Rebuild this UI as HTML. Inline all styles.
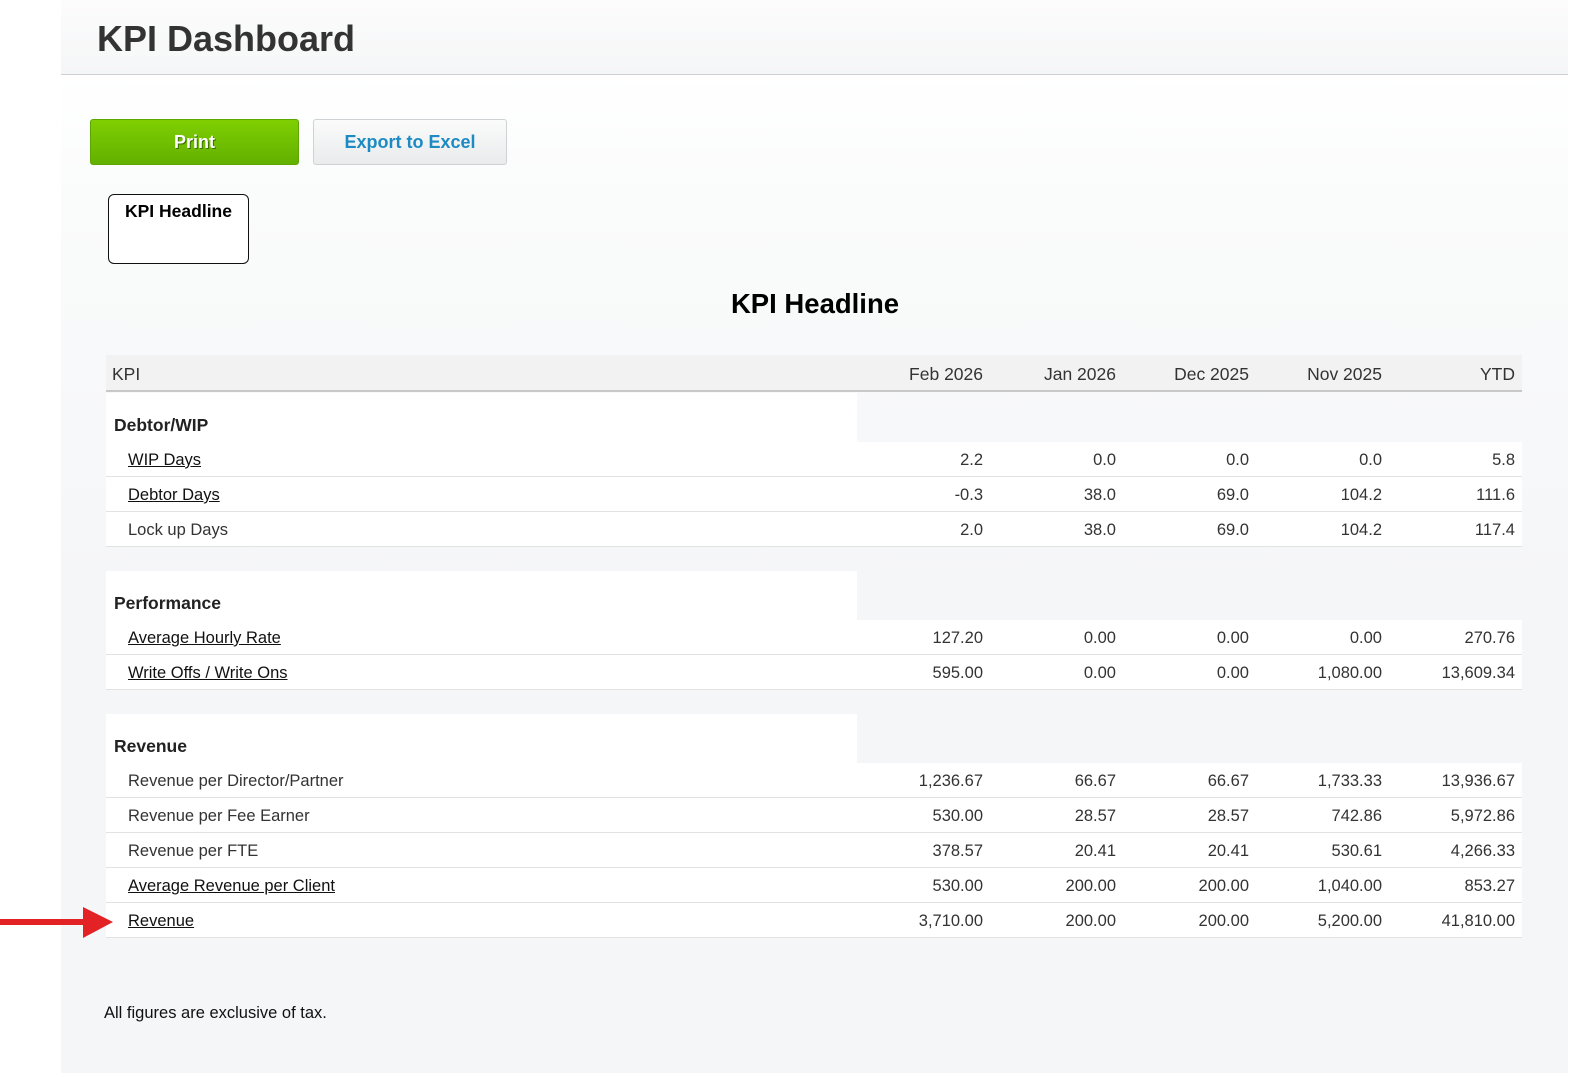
<!DOCTYPE html>
<html><head><meta charset="utf-8"><style>
*{margin:0;padding:0;box-sizing:border-box}
body{width:1574px;height:1078px;background:#fff;font-family:"Liberation Sans",Arial,sans-serif;position:relative;overflow:hidden;color:#222}
.main{position:absolute;left:61px;top:0;width:1507px;height:1073px;background:linear-gradient(#fff 75px,#fafbfb 200px,#f5f6f8 600px)}
.hdr{position:absolute;left:61px;top:0;width:1507px;height:75px;background:linear-gradient(#fcfcfc,#f5f6f7);border-bottom:1px solid #cfcfcf}
h1{position:absolute;left:97px;top:18px;font-size:36px;font-weight:bold;color:#333}
.btn{position:absolute;top:119px;height:46px;border-radius:3px;font-size:18px;font-weight:bold;text-align:center;line-height:44px}
.print{left:90px;width:209px;background:linear-gradient(#7fcf02,#63b000);border:1px solid #5da600;color:#fff;text-shadow:1px 1px 0 #3a6d00}
.excel{left:313px;width:194px;background:linear-gradient(#fbfbfb,#e9ebec);border:1px solid #cfd2d4;color:#1d8bc3}
.tab{position:absolute;left:108px;top:194px;width:141px;height:70px;border:1px solid #111;border-radius:6px;background:#fff;font-weight:bold;font-size:17.5px;text-align:center;padding-top:6px;color:#000}
.title{position:absolute;left:0;width:1630px;top:288px;text-align:center;font-size:27.5px;font-weight:bold;color:#000}
.r{position:absolute;left:106px;width:1416px;height:35px;background:#fff;border-bottom:1px solid #e2e2e0;font-size:16.5px;color:#333}
.r span{position:absolute;top:9px}
.r .l{left:22px}
.r a{color:#111;text-decoration:underline}
.n{text-align:right;width:120px}
.c1{left:757px}.c2{left:890px}.c3{left:1023px}.c4{left:1156px}.c5{left:1289px}
.th{position:absolute;left:106px;top:355px;width:1416px;height:37px;background:#f2f2f2;border-bottom:2px solid #c8c8c8;font-size:17.5px;color:#333}
.th span{position:absolute;top:9px}
.sec{position:absolute;left:106px;width:751px;height:50px;background:#fff;font-weight:bold;font-size:17.5px;color:#222;padding:22px 0 0 8px}
.note{position:absolute;left:104px;top:1004px;font-size:16.5px;color:#111}
</style></head><body>
<div class="main"></div>
<div class="hdr"></div>
<h1>KPI Dashboard</h1>
<div class="btn print">Print</div>
<div class="btn excel">Export to Excel</div>
<div class="tab">KPI Headline</div>
<div class="title">KPI Headline</div>
<div class="th"><span style="left:6px">KPI</span><span class="n c1">Feb 2026</span><span class="n c2">Jan 2026</span><span class="n c3">Dec 2025</span><span class="n c4">Nov 2025</span><span class="n c5">YTD</span></div>

<div class="sec" style="top:393px">Debtor/WIP</div>
<div class="r" style="top:442px"><span class="l"><a>WIP Days</a></span><span class="n c1">2.2</span><span class="n c2">0.0</span><span class="n c3">0.0</span><span class="n c4">0.0</span><span class="n c5">5.8</span></div>
<div class="r" style="top:477px"><span class="l"><a>Debtor Days</a></span><span class="n c1">-0.3</span><span class="n c2">38.0</span><span class="n c3">69.0</span><span class="n c4">104.2</span><span class="n c5">111.6</span></div>
<div class="r" style="top:512px"><span class="l">Lock up Days</span><span class="n c1">2.0</span><span class="n c2">38.0</span><span class="n c3">69.0</span><span class="n c4">104.2</span><span class="n c5">117.4</span></div>

<div class="sec" style="top:571px">Performance</div>
<div class="r" style="top:620px"><span class="l"><a>Average Hourly Rate</a></span><span class="n c1">127.20</span><span class="n c2">0.00</span><span class="n c3">0.00</span><span class="n c4">0.00</span><span class="n c5">270.76</span></div>
<div class="r" style="top:655px"><span class="l"><a>Write Offs / Write Ons</a></span><span class="n c1">595.00</span><span class="n c2">0.00</span><span class="n c3">0.00</span><span class="n c4">1,080.00</span><span class="n c5">13,609.34</span></div>

<div class="sec" style="top:714px">Revenue</div>
<div class="r" style="top:763px"><span class="l">Revenue per Director/Partner</span><span class="n c1">1,236.67</span><span class="n c2">66.67</span><span class="n c3">66.67</span><span class="n c4">1,733.33</span><span class="n c5">13,936.67</span></div>
<div class="r" style="top:798px"><span class="l">Revenue per Fee Earner</span><span class="n c1">530.00</span><span class="n c2">28.57</span><span class="n c3">28.57</span><span class="n c4">742.86</span><span class="n c5">5,972.86</span></div>
<div class="r" style="top:833px"><span class="l">Revenue per FTE</span><span class="n c1">378.57</span><span class="n c2">20.41</span><span class="n c3">20.41</span><span class="n c4">530.61</span><span class="n c5">4,266.33</span></div>
<div class="r" style="top:868px"><span class="l"><a>Average Revenue per Client</a></span><span class="n c1">530.00</span><span class="n c2">200.00</span><span class="n c3">200.00</span><span class="n c4">1,040.00</span><span class="n c5">853.27</span></div>
<div class="r" style="top:903px"><span class="l"><a>Revenue</a></span><span class="n c1">3,710.00</span><span class="n c2">200.00</span><span class="n c3">200.00</span><span class="n c4">5,200.00</span><span class="n c5">41,810.00</span></div>

<svg style="position:absolute;left:0;top:905px" width="116" height="36"><rect x="0" y="14" width="86" height="6" fill="#e32226"/><polygon points="83,2 113,17 83,33" fill="#e32226"/></svg>

<div class="note">All figures are exclusive of tax.</div>
</body></html>
